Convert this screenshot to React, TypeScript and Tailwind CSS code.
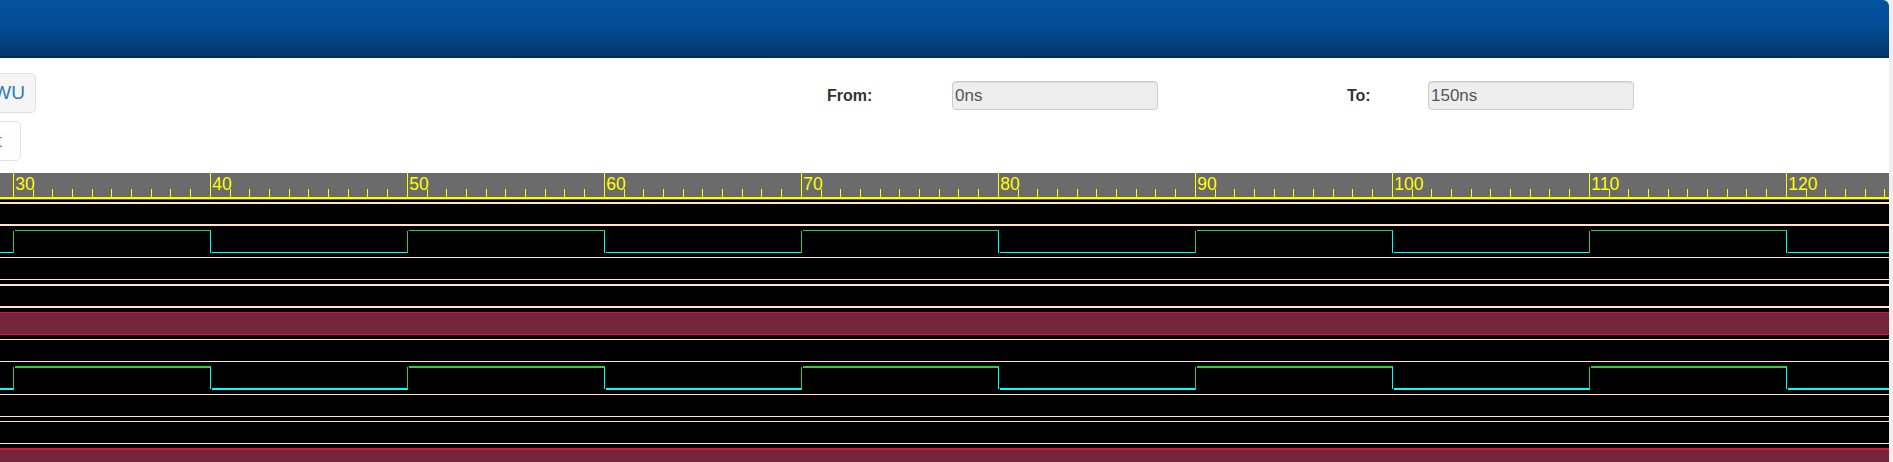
import React from "react";

const X0 = 13.3;
const STEP = 197;
const WIDTH = 1889;
const GREEN = "#32cd32";
const CYAN = "#00ffff";
const PEACH = "#ffe4c4";
const RED = "#dc143c";
const MAROON = "#74253a";

const majors = Array.from({ length: 10 }, (_, i) => ({
  x: X0 + i * STEP,
  label: 30 + i * 10,
}));

const minors: number[] = [];
for (let i = 0; i < 100; i++) {
  if (i % 10 === 0) continue;
  const x = X0 + i * (STEP / 10);
  if (x < WIDTH) minors.push(x);
}

// peach borders of the value rows (svg y, height)
const rowLines: [number, number][] = [
  [29, 2], [51, 2],
  [84, 1], [106, 1],
  [111, 2], [133, 2],
  [166, 1], [188, 1],
  [221, 1], [243, 1],
  [248, 1], [270, 1],
];

function Clock({ hi, lo, w }: { hi: number; lo: number; w: number }) {
  const parts: React.ReactNode[] = [];
  let start = 0;
  let high = false;
  majors.forEach(({ x }, k) => {
    parts.push(
      <rect
        key={`h${k}`}
        x={start}
        y={(high ? hi : lo) - w / 2}
        width={x + 1 - start}
        height={w}
        fill={high ? GREEN : CYAN}
      />
    );
    const rising = k % 2 === 0;
    parts.push(
      <rect
        key={`v${k}`}
        x={x - 0.5}
        y={hi}
        width={1}
        height={lo - hi}
        fill={rising ? GREEN : CYAN}
      />
    );
    high = rising;
    start = x + 1.7;
  });
  parts.push(
    <rect
      key="end"
      x={start}
      y={(high ? hi : lo) - w / 2}
      width={WIDTH - start}
      height={w}
      fill={high ? GREEN : CYAN}
    />
  );
  return <g>{parts}</g>;
}

function Waveform() {
  return (
    <svg width={WIDTH} height={289} className="block" shapeRendering="crispEdges">
      <rect x={0} y={0} width={WIDTH} height={289} fill="#000" />
      {/* ruler */}
      <rect x={0} y={0} width={WIDTH} height={24} fill="#6b6b6b" />
      <rect x={0} y={24} width={WIDTH} height={1.5} fill="#ffff00" />
      <rect x={0} y={25.5} width={WIDTH} height={1.7} fill="#595959" />
      {majors.map((m) => (
        <g key={m.label}>
          <rect x={m.x - 0.5} y={0} width={1} height={24} fill="#ffff00" />
          <text
            x={m.x + 2}
            y={17}
            fill="#ffff00"
            fontSize={17.5}
            fontFamily="'Liberation Sans', Arial, sans-serif"
            shapeRendering="auto"
          >
            {m.label}
          </text>
        </g>
      ))}
      {minors.map((x) => (
        <rect key={x} x={x - 0.5} y={16} width={1} height={8} fill="#ffff00" />
      ))}

      {rowLines.map(([y, h]) => (
        <rect key={y} x={0} y={y} width={WIDTH} height={h} fill={PEACH} />
      ))}

      <Clock hi={57.5} lo={79.5} w={1} />
      <Clock hi={194} lo={216} w={1.6} />

      {/* undefined bus rows */}
      <rect x={0} y={139} width={WIDTH} height={22.5} fill={MAROON} />
      <rect x={0} y={138.7} width={WIDTH} height={1.3} fill={RED} />
      <rect x={0} y={160.7} width={WIDTH} height={1.1} fill={RED} />
      <rect x={0} y={275} width={WIDTH} height={14} fill={MAROON} />
      <rect x={0} y={275} width={WIDTH} height={2} fill={RED} />
    </svg>
  );
}

export default function App() {
  return (
    <div className="h-[462px] w-[1893px] overflow-hidden bg-[#efefef] font-['Liberation_Sans',Arial,sans-serif]">
      <div className="w-[1889px] overflow-hidden rounded-tr-[6px] bg-white">
        <div className="h-[58px] border-b-2 border-[#022c57] bg-linear-to-b from-[#0453a1] via-[#044b92] to-[#03386c]" />

        <div className="grid h-[115px] grid-cols-[827px_125px_206px_189px_81px_206px] items-start">
          <div className="flex flex-col gap-2 pt-[15px]">
            <div className="flex w-[36px] justify-end">
              <button className="flex h-[40px] shrink-0 items-center rounded-[5px] border border-[#e2e2e2] bg-[#f5f5f5] pl-3 pr-[10px] text-[19px] text-[#337ab7]">
                WU
              </button>
            </div>
            <div className="flex w-[21px] justify-end">
              <button className="flex h-[40px] shrink-0 items-center rounded-[5px] border border-[#e2e2e2] bg-white pl-3 pr-[18px] text-[19px] text-[#e05a55]">
                Reset
              </button>
            </div>
          </div>

          <div className="pt-[23px] text-[16px] font-bold leading-[29px] text-[#333]">From:</div>
          <div className="pt-[23px]">
            <input
              readOnly
              value="0ns"
              className="h-[29px] w-[206px] rounded-[4px] border border-[#cccccc] bg-[#eeeeee] pl-[2px] text-[17px] text-[#555] shadow-[inset_0_1px_1px_rgba(0,0,0,0.075)] outline-none"
            />
          </div>

          <div />
          <div className="pt-[23px] text-[16px] font-bold leading-[29px] text-[#333]">To:</div>
          <div className="pt-[23px]">
            <input
              readOnly
              value="150ns"
              className="h-[29px] w-[206px] rounded-[4px] border border-[#cccccc] bg-[#eeeeee] pl-[2px] text-[17px] text-[#555] shadow-[inset_0_1px_1px_rgba(0,0,0,0.075)] outline-none"
            />
          </div>
        </div>

        <Waveform />
      </div>
    </div>
  );
}
